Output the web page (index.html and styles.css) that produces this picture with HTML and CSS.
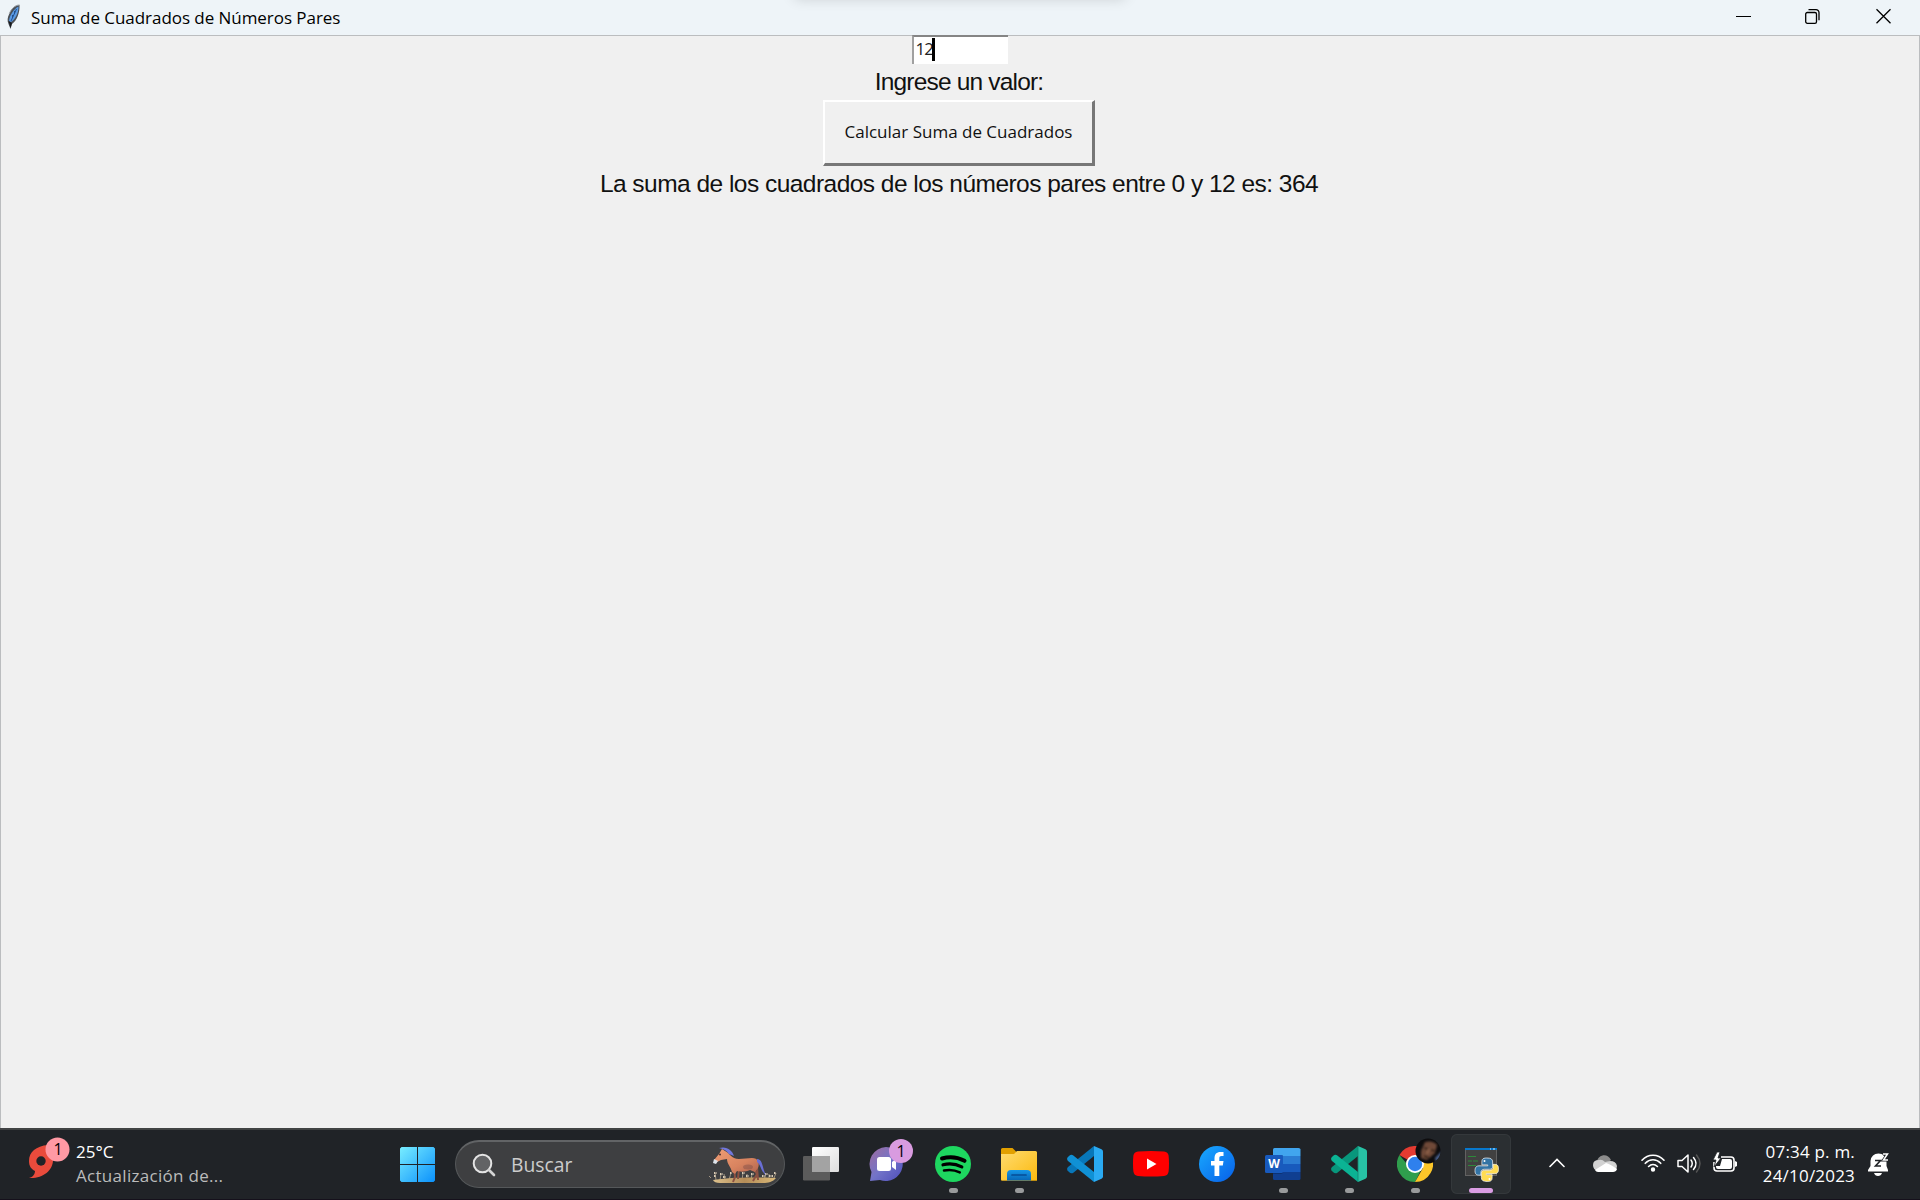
FILE: index.html
```html
<!DOCTYPE html>
<html lang="es">
<head>
<meta charset="utf-8">
<title>Suma de Cuadrados de Números Pares</title>
<link rel="stylesheet" href="styles.css">
</head>
<body>
<header class="titlebar">
  <svg class="feather" width="16" height="26" viewBox="0 0 16 26"><path d="M13.500 1C9 1 5 5 3.200 10 1.500 13 1 17 2.500 20L4.500 25 6 20C11 17 14 8 13.500 1Z" fill="#4b5057"/><path d="M12.500 2.500C8 5 3.500 11 3 17L5 18C9.500 15 12.500 9 12.500 2.500Z" fill="#5a9ae4"/><path d="M10.500 5 5 17M8.500 7v3M6.500 11v3" stroke="#24508c" stroke-width="1" fill="none"/><path d="M13.500 1C9 1 5 5 3.200 10" stroke="#9a9fa6" fill="none"/><path d="M2.500 17l2 7 1.500-5Z" fill="#17191c"/></svg>
  <h1 class="title">Suma de Cuadrados de Números Pares</h1>
  <div class="controls">
    <svg width="15" height="16" viewBox="0 0 15 16"><path d="M0 8.500h15" stroke="#000"/></svg>
    <svg width="15" height="16" viewBox="0 0 15 16" fill="none" stroke="#000" stroke-width="1.300"><rect x=".7" y="4.500" width="10.800" height="10.800" rx="1.600"/><path d="M3.500 1.700H11a3 3 0 0 1 3 3v7.500"/></svg>
    <svg width="15" height="16" viewBox="0 0 15 16"><path d="M.5 1.300l14 14M14.500 1.300l-14 14" stroke="#000" stroke-width="1.300"/></svg>
  </div>
  <div class="top-shadow"></div>
</header>
<main class="client">
  <div class="entry"><span class="entry-text">12</span><span class="caret"></span></div>
  <div class="label"><span class="prompt">Ingrese un valor:</span></div>
  <button class="calc"><span>Calcular Suma de Cuadrados</span></button>
  <div class="label"><span class="result">La suma de los cuadrados de los números pares entre 0 y 12 es: 364</span></div>
</main>
<footer class="taskbar">
  <div class="weather">
    <svg width="44" height="44" viewBox="0 0 44 44"><path d="M20 8C8 9 1 15 1 24c0 5 2 8 6 10 0 3-2 6-6 7 13 1 24-7 24-18V8Z" fill="#e94b3c"/><circle cx="13" cy="24" r="4.700" fill="#202327"/><circle cx="29.500" cy="12.500" r="12" fill="#ff99a4"/></svg>
    <span class="badge-num weather-num">1</span>
    <div class="weather-text"><span class="temp">25°C</span><span class="news">Actualización de...</span></div>
  </div>
  <svg class="start" width="35" height="35" viewBox="0 0 35 35"><defs><linearGradient id="win" x1="0" y1="0" x2="35" y2="35" gradientUnits="userSpaceOnUse"><stop stop-color="#78edff"/><stop offset="1" stop-color="#0b91fb"/></linearGradient></defs><path d="M1.500 0H17v17H0V1.500ZM18 0h15.500L35 1.500V17H18ZM0 18h17v17H1.500L0 33.500ZM18 18h17v15.500L33.500 35H18Z" fill="url(#win)"/></svg>
  <div class="search">
    <svg width="24" height="24" viewBox="0 0 24 24" fill="none"><circle cx="10.500" cy="10.500" r="8.800" fill="#626365" stroke="#e4e4e4" stroke-width="2"/><path d="m17 17 5 5" stroke="#d4d4d4" stroke-width="2.600" stroke-linecap="round"/></svg>
    <span class="search-text">Buscar</span>
    <svg class="horse" width="72" height="40" viewBox="0 0 72 40">
      <defs><linearGradient id="coat" x1="0" y1="0" x2="1" y2="1"><stop stop-color="#f09d74"/><stop offset=".6" stop-color="#d8835f"/><stop offset="1" stop-color="#b06450"/></linearGradient><linearGradient id="sand" x1="0" y1="0" x2="1" y2="0"><stop stop-color="#dcc08c"/><stop offset=".5" stop-color="#b58d58"/><stop offset="1" stop-color="#d9b878"/></linearGradient></defs>
      <path d="M1 30l2 2M8 34l-1-7M12 34l1-6M17 34l-1-6M21 34l2-7M34 34l1-7M39 34v-6M43 34l1-6M56 34l2-6M61 34v-6M66 32l2-5" stroke="#a09482" stroke-width="1" fill="none"/>
      <path d="M6 27h3M6 30h2M12 28h3M15 31h3M22 27h2M34 27h3M38 30h3M43 28h3M54 30h3M57 28h3M61 30h4M66 27h2" stroke="#d9cbb4" stroke-width="2" stroke-dasharray="1.500 1" fill="none"/>
      <path d="M5 34C20 31 52 31 68 32 65 36 60 37 55 37H12C8 37 6 36 5 34Z" fill="url(#sand)"/>
      <path d="M26 22l1 9-2 5M31 22l-1 11M45 22l4 6-4 7M49 21l1 13" stroke="#8d5142" stroke-width="2" fill="none"/>
      <path d="M14 3l3 2c5 2 6 8 14 8l13-1c6 0 8 5 6 10l-3 4-5-2c-4 2-10 2-13 1l-2 3-3-2c-1-5-5-8-5-13l-6 1-6 3-1-3 5-6Z" fill="url(#coat)"/>
      <path d="M11 2c8-2 13 2 15 8l-5-2c-2-3-5-5-10-6Z" fill="#7277dc"/><path d="M49 13c6 0 5 9 9 16-5-3-5-10-9-13Z" fill="#696ed4"/>
      <path d="m6 13 4 2-2 3-3-1Z" fill="#dde3ea"/><circle cx="12" cy="8.500" r="1" fill="#462e2d"/><ellipse cx="40" cy="21" rx="5" ry="2.500" fill="#7f4d48" opacity=".45"/>
    </svg>
  </div>
  <nav class="apps">
    <div class="app"><svg width="36" height="36" viewBox="0 0 36 36"><defs><linearGradient id="tv" x1="0" y1="0" x2="1" y2="1"><stop stop-color="#fff"/><stop offset="1" stop-color="#ddd"/></linearGradient></defs><rect x="9" y="1" width="27" height="25" rx="1.200" fill="url(#tv)"/><rect y="10" width="27" height="24.500" rx="1.200" fill="#5b5b5b"/><path d="M9 10h18v16H9Z" fill="#a3a3a3"/></svg></div>
    <div class="app"><svg width="36" height="36" viewBox="0 0 36 36"><defs><linearGradient id="chat" x1="0" y1="0" x2="1" y2="1"><stop stop-color="#a06b9e"/><stop offset=".5" stop-color="#7374c8"/><stop offset="1" stop-color="#4d4dba"/></linearGradient></defs><path d="M17 1A17 17 0 1 1 11 34L1 35l1.500-9A17 17 0 0 1 17 1Z" fill="url(#chat)"/><rect x="8" y="11" width="14" height="14" rx="2.500" fill="#fff"/><path d="M23 16l4-3v11l-4-3Z" fill="#fff"/></svg><span class="badge">1</span></div>
    <div class="app"><svg width="36" height="36" viewBox="0 0 36 36" fill="none" stroke="#000" stroke-linecap="round"><circle cx="18" cy="18" r="18" fill="#1ed760" stroke="none"/><path d="M7 12.500c7-2 16-1.200 22.500 2.300" stroke-width="4"/><path d="M8 18.800c6.500-1.700 13-.9 18.800 2.100" stroke-width="3.200"/><path d="M9 24.500c6-1.300 10.800-.6 15.800 1.900" stroke-width="2.500"/></svg><i class="run"></i></div>
    <div class="app"><svg width="36" height="36" viewBox="0 0 36 36"><defs><linearGradient id="fold" x1="0" y1="0" x2="1" y2="1"><stop stop-color="#ffdc70"/><stop offset="1" stop-color="#fbb90e"/></linearGradient><linearGradient id="foldb" x1="0" y1="0" x2="0" y2="1"><stop stop-color="#1596e7"/><stop offset="1" stop-color="#0866b6"/></linearGradient></defs><path d="M0 3.500Q0 2 1.500 2h10l4 4H36v28.500H0Z" fill="#e2a000"/><path d="M0 8h13l3-3h18.500Q36 5 36 6.500v28H1L0 33.500Z" fill="url(#fold)"/><path d="M6 34.500v-6.500q0-4 4-4h16q4 0 4 4v6.500Z" fill="url(#foldb)"/><path d="M11 29h14" stroke="#064c96" stroke-width="1.700" stroke-linecap="round"/></svg><i class="run"></i></div>
    <div class="app"><svg width="36" height="36" viewBox="0 0 36 36"><path d="M27 0v10L6 27q-2 1-4-1l-1.500-1.500q-1-2 .5-3.500Z" fill="#0877b9"/><path d="M27 36V26L6 9.200q-2-1-4 .8L.5 11.500q-1 2 .5 3.500Z" fill="#1091d5"/><path d="M27 0l7.500 3.300Q36 4 36 5.500v25q0 1.500-1.500 2.200L27 36Z" fill="#2aaaf2"/></svg></div>
    <div class="app"><svg width="36" height="36" viewBox="0 0 36 36"><path d="M5 5.500q13-1 26 0 4 .5 4.600 4 .8 8.500 0 16-.6 4-4.600 4.500-13 1-26 0-4-.5-4.600-4.500-.8-8 0-16 .6-3.500 4.600-4Z" fill="#f00"/><path d="M14 12.500 23.500 18 14 23.500Z" fill="#fff"/></svg></div>
    <div class="app"><svg width="36" height="36" viewBox="0 0 36 36"><defs><linearGradient id="fb" x1="0" y1="0" x2="1" y2="1"><stop stop-color="#19aaff"/><stop offset="1" stop-color="#075fe8"/></linearGradient></defs><circle cx="18" cy="18" r="18" fill="url(#fb)"/><path d="M15.500 30V19.500H12v-4.600h3.500V12c0-3.800 2-6 6-6h3v4h-2c-1.600 0-2.200.8-2.200 2.200v2.700h4.200l-.7 4.600h-3.500V30Z" fill="#fff"/></svg></div>
    <div class="app"><svg width="36" height="36" viewBox="0 0 36 36"><path d="M8 10V3.500Q8 2 9.500 2h24Q35.500 2 35.500 3.500V10Z" fill="#41a5ee"/><path d="M8 10h27.500v8H8Z" fill="#2b7cd3"/><path d="M8 18h27.500v8H8Z" fill="#185abd"/><path d="M8 26h27.500v6.500q0 1.500-1.500 1.500H9.500Q8 34 8 32.500Z" fill="#103f91"/><path d="M8 9h10v17q0 2-2 2H8Z" opacity=".2"/><rect y="9" width="18" height="18" rx="1.500" fill="#185abd"/></svg><span class="word">W</span><i class="run"></i></div>
    <div class="app"><svg width="36" height="36" viewBox="0 0 36 36"><path d="M27 0v10L6 27q-2 1-4-1l-1.500-1.500q-1-2 .5-3.500Z" fill="#08977c"/><path d="M27 36V26L6 9.200q-2-1-4 .8L.5 11.500q-1 2 .5 3.500Z" fill="#0bb394"/><path d="M27 0l7.500 3.300Q36 4 36 5.500v25q0 1.500-1.500 2.200L27 36Z" fill="#27c2a5"/><path d="M27 0v36" stroke="#15836f" stroke-width=".8"/></svg><i class="run"></i></div>
    <div class="app"><svg width="36" height="36" viewBox="0 0 36 36"><path d="M18 18 2.400 9A18 18 0 0 1 33.600 9Z" fill="#e43b31"/><path d="M18 18h-8L2.400 9A18 18 0 0 0 18 36l7-14Z" fill="#2f9e4d"/><path d="M18 9h15.600A18 18 0 0 1 18 36l8-14Z" fill="#fcc629"/><circle cx="18" cy="18" r="9" fill="#fff"/><circle cx="18" cy="18" r="7.200" fill="#2f80ed"/></svg><svg class="avatar" width="27" height="26" viewBox="0 0 27 26"><defs><clipPath id="face"><circle cx="13" cy="13" r="12.500"/></clipPath><filter id="soft"><feGaussianBlur stdDeviation=".8"/></filter></defs><g clip-path="url(#face)"><path d="M0 0h27v26H0Z" fill="#0d0c0e"/><g filter="url(#soft)"><path d="M10 4q8-2 12 3l-2 8-8 7-6-2v-7Z" fill="#704a38"/><path d="M9 10l4 1M16 12l4 1M9 18l5 2" stroke="#20150f" stroke-width="1.800"/><path d="M14 11l-2 5" stroke="#94664e" stroke-width="2"/><path d="m20 20 7-7v9l-6 2Z" fill="#4c6492"/></g></g></svg><i class="run"></i></div>
    <div class="app active"><svg width="36" height="36" viewBox="0 0 36 36"><rect x="2" y="2" width="32" height="28" fill="#626262"/><rect x="3" y="4" width="30" height="25" fill="#414141"/><path d="M2 2h32v2H2Z" fill="#0878cc"/><path d="M27 3h1M30 3h2" stroke="#cceaff"/><path d="M5 10.500h8M5 15h4M10 15h5M5 19.500h8" stroke="#2e883b" stroke-width="1.200"/><g transform="translate(12 12) scale(.98)" stroke="#fff" stroke-width=".7"><path d="M12 0C7 0 7 2 7 5v2h6v1H4c-4 0-4 4-4 5 0 4 2 4.500 4 4.500h2V15c0-2 1-3.500 3.500-3.500H15c2 0 3-1 3-3V4c0-3-2-4-6-4Z" fill="#3474a5"/><path d="M12.500 24c5 0 5-2 5-5v-2h-6v-1H20c4 0 4-3 4-5 0-4-2-4.500-4-4.500h-1.500v3c0 2-1.500 3-3.500 3H9.500c-2 0-3 1-3 3V20c0 3 2 4 6 4Z" fill="#ffdc53"/></g><circle cx="21.500" cy="15" r="1" fill="#fff"/><circle cx="26.500" cy="33" r="1" fill="#fff"/></svg><i class="run focus"></i></div>
  </nav>
  <div class="tray">
    <svg class="chevron" width="16" height="24" viewBox="0 0 16 24"><path d="M1 15.500 8 8.500l7 7" stroke="#fff" stroke-width="1.600" fill="none" stroke-linecap="round"/></svg>
    <svg class="cloud" width="24" height="24" viewBox="0 0 24 24"><path d="M4 10C6 3 15 2 18 9l-5 4Z" fill="#8c8c8c"/><path d="M6 9q3-1 6 2l5-1q6 0 7 5l-1 5H5q-5-1-5-6t6-5Z" fill="#d2d2d2"/><path d="m2 19 11-7q4 1 11 6-1 3-4 3H5q-2 0-3-2Z" fill="#fff"/></svg>
    <svg width="24" height="24" viewBox="0 0 24 24" fill="none" stroke="#fff" stroke-width="1.600" stroke-linecap="round"><path d="M1 9.200C7 2.500 17 2.500 23 9.200M4.300 12.300c4.500-4.700 10.900-4.700 15.400 0M7.600 15.500c2.600-2.700 6.200-2.700 8.800 0"/><circle cx="12" cy="18.500" r="1.400" fill="#fff"/></svg>
    <svg width="24" height="24" viewBox="0 0 24 24" fill="none" stroke="#fff" stroke-width="1.500" stroke-linecap="round" stroke-linejoin="round"><path d="M1 9.500h4L11 4v17l-6-5.500H1ZM14 9q2.500 3.500 0 7M16.500 6.500q5 6 0 12"/><path d="M19.500 4q7 8.500 0 17" stroke="#555"/></svg>
    <svg width="24" height="24" viewBox="0 0 24 24"><path d="M8 6h10q3 0 3 3v8q0 3-3 3H4q-3 0-3-3v-6" fill="none" stroke="#fff" stroke-width="1.600"/><path d="M9 8h8q2 0 2 2v6q0 2-2 2H5q-2 0-2-2v-1h4ZM22 10l2 1v4l-2 1Z" fill="#fff"/><path d="M4 1 0 9h3l-2 7 7-9H5l2-6Z" fill="#fff" stroke="#202327" stroke-width=".8"/></svg>
    <div class="clock"><span class="time">07:34 p. m.</span><span class="date">24/10/2023</span></div>
    <svg class="bell" width="22" height="26" viewBox="0 0 22 26"><path d="M2.500 10Q3.500 2.500 10.500 2.500t8 7.500v5l1.500 4v1.500H0V19l2.500-4ZM6 22h8q-1 3-4 3T6 22Z" fill="#fff"/><path d="M15 3h4.500L15.500 9H20" fill="none" stroke="#202327" stroke-width="3"/><path d="M15 3h4.500L15.500 9H20" stroke="#fff" stroke-width="1.500" fill="none"/><path d="M7 9.500h5.500L7.500 15h5.500" stroke="#202327" stroke-width="1.600" fill="none"/></svg>
  </div>
</footer>
</body>
</html>
```
FILE: styles.css
```css
* { box-sizing: border-box; }
body { margin: 0; width: 1920px; height: 1200px; overflow: hidden; display: flex; flex-direction: column; background: #f0f0f0; font-family: "Open Sans", "Noto Sans", sans-serif; }
svg { display: block; flex: none; }
span { white-space: nowrap; }
.titlebar { height: 35px; flex: none; display: flex; background: #eef4f8; position: relative; overflow: hidden; }
.feather { margin: 4px 0 0 6px; }
.title { margin: 0 0 0 9px; font-size: 17px; line-height: 35px; font-weight: 400; letter-spacing: -.05px; color: #000; white-space: nowrap; }
.controls { margin-left: auto; display: flex; gap: 54px; padding: 8px 29px 0 0; }
.controls svg:nth-child(2) { margin-right: 2px; }
.top-shadow { position: absolute; left: 795px; top: -12px; width: 330px; height: 10px; box-shadow: 0 0 14px #00000030; }
.client { flex: 1; display: flex; flex-direction: column; align-items: center; border: solid #bbbdbf; border-width: 1px 1px 0; padding-right: 2px; }
.entry { width: 96px; height: 29px; margin-top: -1px; background: #fff; border: solid #a0a0a0; border-width: 2px 0 0 2px; border-top-color: #858585; display: flex; margin-left: 1px; }
.entry-text { font-size: 17px; line-height: 24px; letter-spacing: -1px; padding-left: 2px; color: #222; }
.caret { width: 3px; height: 23px; background: #000; margin: 1px 0 0 -1px; }
.label { height: 36px; display: flex; align-items: center; font-family: "Liberation Sans", Arial, sans-serif; font-size: 24.5px; color: #111; padding-bottom: 1px; }
.prompt { letter-spacing: -.82px; }
.result { letter-spacing: -.53px; }
.calc { width: 272px; height: 66px; padding: 0 0 2px; background: #f0f0f0; border-style: solid; border-width: 2px 3px 3px 2px; border-color: #fff #777 #777 #fff; font: 17px "Open Sans", "Noto Sans", sans-serif; color: #111; letter-spacing: 0; }
.taskbar { height: 72px; flex: none; background: #202327; border-top: 2px solid #414344; border-bottom: 1px solid #15101b; display: flex; align-items: flex-start; color: #fff; }
.weather { width: 399px; padding: 7px 0 0 28px; display: flex; position: relative; }
.badge-num { position: absolute; color: #000; font-size: 16px; line-height: 24px; width: 24px; text-align: center; }
.weather-num { left: 46px; top: 7px; }
.weather-text { display: flex; flex-direction: column; margin-left: 4px; font-size: 17px; line-height: 24px; padding-top: 3px; }
.temp { letter-spacing: 0; }
.news { color: #bbb; letter-spacing: .3px; }
.start { margin: 17px 20px 0 1px; }
.search { width: 330px; height: 48px; margin-top: 10px; border-radius: 24px; background: #3e3f41; border: 1px solid #55585a; border-top: 2px solid #626466; display: flex; align-items: center; }
.search > svg:first-child { margin-left: 16px; }
.search-text { color: #ccc; font-size: 19.3px; line-height: 30px; margin-left: 15px; }
.horse { margin-left: auto; margin-right: 4px; align-self: flex-start; margin-top: 4px; }
.apps { display: flex; margin-left: 6px; gap: 6px; padding-top: 4px; }
.app { width: 60px; height: 60px; position: relative; display: flex; justify-content: center; padding-top: 12px; }
.app > svg { flex: none; }
.active { background: #2b2f32; border-radius: 6px; box-shadow: inset 0 0 0 1px #34383b; }
.badge { position: absolute; left: 32px; top: 5px; width: 24px; height: 24px; border-radius: 50%; background: #d99be0; color: #000; font-size: 16px; line-height: 24px; text-align: center; }
.word { position: absolute; left: 12px; top: 21px; width: 18px; line-height: 18px; text-align: center; font-weight: 700; font-size: 12px; }
.run { position: absolute; left: 26px; top: 54px; width: 9px; height: 5px; border-radius: 2.5px; background: #999b9c; }
.focus { left: 18px; width: 24px; background: #da9de3; }
.avatar { position: absolute; left: 30px; top: 4px; }
.tray { flex: 1; display: flex; padding: 21px 30px 0 0; gap: 12px; justify-content: flex-end; }
.chevron { margin-right: 16px; }
.cloud { margin-right: 12px; }
.clock { display: flex; flex-direction: column; align-items: flex-end; width: 106px; margin: -11px 1px 0 0; font-size: 17px; line-height: 24px; letter-spacing: .2px; }
.tray svg:first-child { margin-left: -1px; }
```
